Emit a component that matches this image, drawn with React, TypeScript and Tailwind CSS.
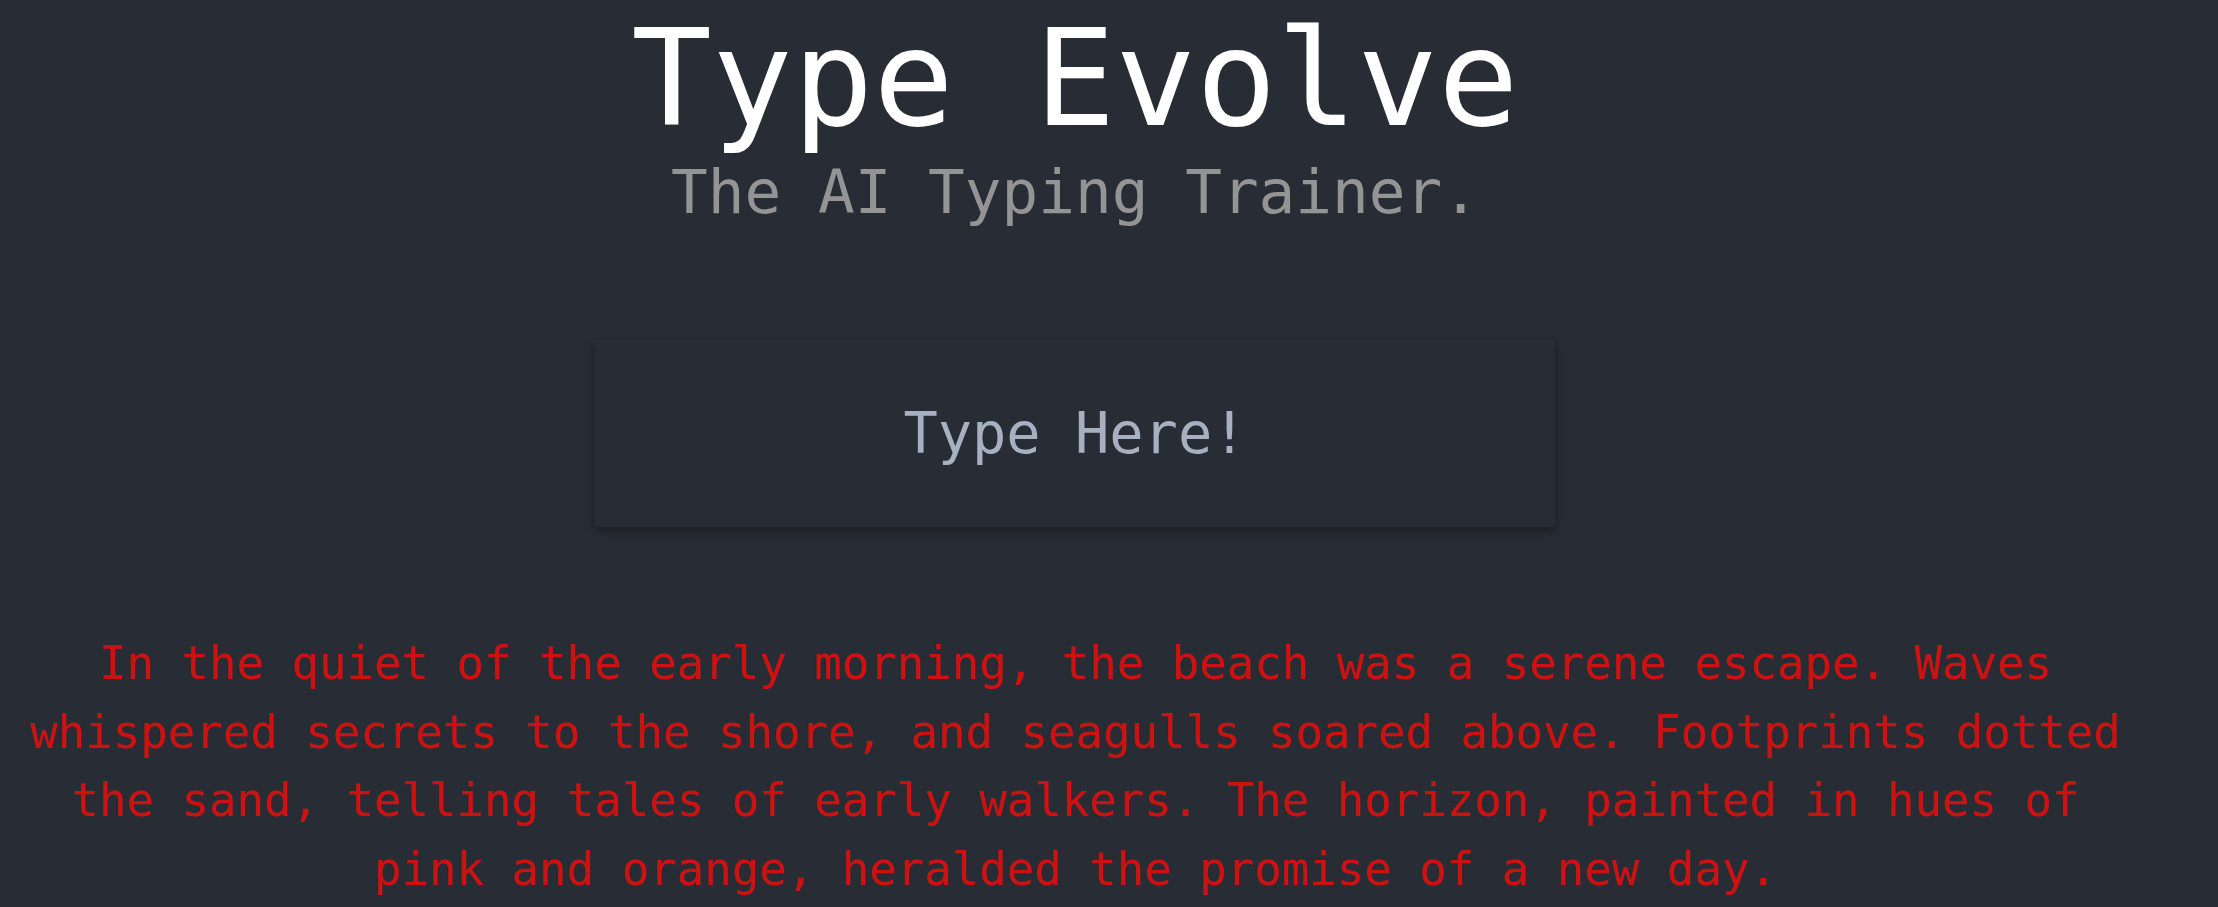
import React from "react";

export default function App() {
  const mono = { fontFamily: '"DejaVu Sans Mono", monospace' };
  return (
    <div
      className="min-h-screen w-full bg-[#282c34] overflow-hidden pr-[68px]"
      style={mono}
    >
      <div className="flex flex-col items-center">
        <h1 className="text-[134px] leading-none text-white mt-[12px] font-normal">
          Type Evolve
        </h1>
        <p className="text-[61px] leading-none text-[#949494] mt-[15px]">
          The AI Typing Trainer.
        </p>
        <div className="mt-[118px] w-[960px] h-[187px] bg-[#282c35] shadow-[0_4px_10px_rgba(0,0,0,0.35)] flex items-center justify-center">
          <span className="text-[57px] text-[#a6b0c0]">Type Here!</span>
        </div>
        <p className="mt-[103px] w-[2138px] text-center text-[45.7px] leading-[68.5px] text-[#cc1111]">
          In the quiet of the early morning, the beach was a serene escape. Waves
          whispered secrets to the shore, and seagulls soared above. Footprints
          dotted the sand, telling tales of early walkers. The horizon, painted in
          hues of pink and orange, heralded the promise of a new day.
        </p>
      </div>
    </div>
  );
}
